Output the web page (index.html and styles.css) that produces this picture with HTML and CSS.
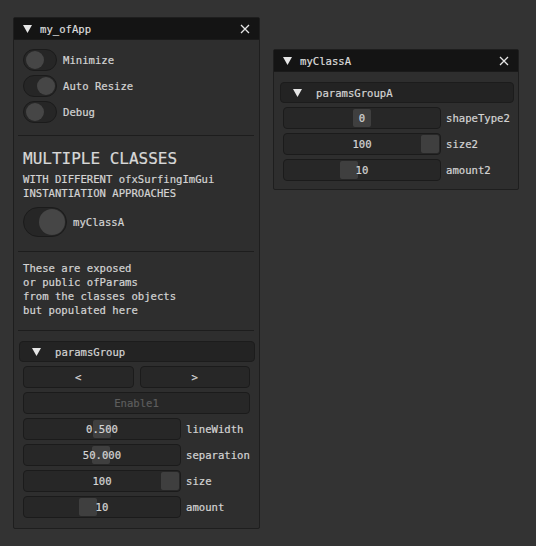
FILE: index.html
```html
<!DOCTYPE html>
<html>
<head>
<meta charset="utf-8">
<link rel="stylesheet" href="styles.css">
</head>
<body>
<div class="desk">
  <div class="win win-left">
    <div class="titlebar">
      <svg class="tri" width="9" height="8" viewBox="0 0 9 8"><polygon points="0,0 9,0 4.5,8" fill="#e6e6e6"/></svg>
      <span class="ttext">my_ofApp</span>
      <svg class="close" width="10" height="10" viewBox="0 0 10 10"><path d="M1 1 L9 9 M9 1 L1 9" stroke="#e6e6e6" stroke-width="1.3"/></svg>
    </div>
    <div class="body">
      <div class="trow"><div class="tog"><div class="knob"></div></div><span>Minimize</span></div>
      <div class="trow"><div class="tog on"><div class="knob"></div></div><span>Auto Resize</span></div>
      <div class="trow"><div class="tog"><div class="knob"></div></div><span>Debug</span></div>
      <div class="sep sep1"></div>
      <div class="big">MULTIPLE CLASSES</div>
      <div class="sub">WITH DIFFERENT ofxSurfingImGui<br>INSTANTIATION APPROACHES</div>
      <div class="trow brow"><div class="tog big-tog on"><div class="knob"></div></div><span>myClassA</span></div>
      <div class="sep sep2"></div>
      <div class="para">These are exposed<br>or public ofParams<br>from the classes objects<br>but populated here</div>
      <div class="sep sep3"></div>
      <div class="header hleft">
        <svg class="tri" width="9" height="8" viewBox="0 0 9 8"><polygon points="0,0 9,0 4.5,8" fill="#e6e6e6"/></svg>
        <span>paramsGroup</span>
      </div>
      <div class="btnrow">
        <div class="frame btn">&lt;</div>
        <div class="frame btn">&gt;</div>
      </div>
      <div class="frame full dis">Enable1</div>
      <div class="srow"><div class="frame slider"><div class="grab" style="left:69px"></div><span class="val">0.500</span></div><span>lineWidth</span></div>
      <div class="srow"><div class="frame slider"><div class="grab" style="left:68px"></div><span class="val">50.000</span></div><span>separation</span></div>
      <div class="srow"><div class="frame slider"><div class="grab" style="left:137px"></div><span class="val">100</span></div><span>size</span></div>
      <div class="srow"><div class="frame slider"><div class="grab" style="left:55px"></div><span class="val">10</span></div><span>amount</span></div>
    </div>
  </div>

  <div class="win win-right">
    <div class="titlebar">
      <svg class="tri" width="9" height="8" viewBox="0 0 9 8"><polygon points="0,0 9,0 4.5,8" fill="#e6e6e6"/></svg>
      <span class="ttext">myClassA</span>
      <svg class="close" width="10" height="10" viewBox="0 0 10 10"><path d="M1 1 L9 9 M9 1 L1 9" stroke="#e6e6e6" stroke-width="1.3"/></svg>
    </div>
    <div class="body rbody">
      <div class="header hright">
        <svg class="tri" width="9" height="8" viewBox="0 0 9 8"><polygon points="0,0 9,0 4.5,8" fill="#e6e6e6"/></svg>
        <span>paramsGroupA</span>
      </div>
      <div class="srow"><div class="frame slider"><div class="grab" style="left:69px"></div><span class="val">0</span></div><span>shapeType2</span></div>
      <div class="srow"><div class="frame slider"><div class="grab" style="left:137px"></div><span class="val">100</span></div><span>size2</span></div>
      <div class="srow"><div class="frame slider"><div class="grab" style="left:56px"></div><span class="val">10</span></div><span>amount2</span></div>
    </div>
  </div>
</div>
</body>
</html>
```

FILE: styles.css
```css
html, body {
  margin: 0;
  padding: 0;
  background: #333333;
  width: 536px;
  height: 546px;
  overflow: hidden;
}
body {
  font-family: "DejaVu Sans Mono", "Liberation Mono", monospace;
  font-size: 10.6px;
  color: #d4d4d4;
  -webkit-text-stroke: 0.2px currentColor;
}
.desk {
  display: flex;
  align-items: flex-start;
  padding: 17px 0 0 13px;
  gap: 13px;
}
.win {
  background: #2e2e2e;
  border: 1px solid #1e1e1e;
  border-radius: 2px;
  box-sizing: border-box;
}
.win-left { width: 247px; height: 512px; }
.win-right { width: 246px; height: 141px; margin-top: 32px; }
.titlebar {
  height: 21px;
  background: #141414;
  display: flex;
  align-items: center;
  padding: 0 9px 0 9px;
  border-bottom: 1px solid #1a1a1a;
}
.titlebar .tri { margin-right: 8px; }
.ttext { flex: 1; font-size: 10.6px; color: #dcdcdc; }
.body {
  padding: 9px 9px 0 9px;
  display: flex;
  flex-direction: column;
}
.trow {
  display: flex;
  align-items: center;
  height: 22px;
  margin-bottom: 4px;
  flex: none;
}
.trow span { margin-left: 6px; }
.tog {
  position: relative;
  width: 34px;
  height: 22px;
  border-radius: 11px;
  background: #262626;
  border: 1px solid #1b1b1b;
  box-sizing: border-box;
}
.knob {
  position: absolute;
  top: 1px;
  left: 2px;
  width: 18px;
  height: 18px;
  border-radius: 50%;
  background: #464646;
}
.tog.on .knob { left: auto; right: 1px; }
.big-tog {
  width: 44px;
  height: 30px;
  border-radius: 15px;
}
.big-tog .knob { width: 26px; height: 26px; top: 1px; }
.brow { height: 30px; margin-top: 7px; margin-bottom: 0; }
.sep {
  height: 1px;
  flex: none;
  background: #1d1d1d;
  margin-left: -5px;
  margin-right: -4px;
}
.sep1 { margin-top: 8px; }
.big {
  font-size: 16px;
  margin-top: 16px;
  line-height: 14px;
  color: #d8d8d8;
}
.sub {
  margin-top: 6px;
  line-height: 14px;
}
.sep2 { margin-top: 14px; }
.para { margin-top: 9px; line-height: 14px; }
.sep3 { margin-top: 13px; }
.header {
  height: 21px;
  flex: none;
  background: #232323;
  border: 1px solid #1c1c1c;
  border-radius: 4px;
  box-sizing: border-box;
  display: flex;
  align-items: center;
}
.hleft { margin: 10px -5px 4px -4px; padding-left: 12px; }
.hleft .tri { margin-right: 14px; }
.hright { margin: 0 -5px 4px -3px; padding-left: 12px; }
.hright .tri { margin-right: 14px; }
.rbody { padding-top: 10px; }
.frame {
  height: 22px;
  flex: none;
  background: #272727;
  border: 1px solid #1b1b1b;
  border-radius: 4px;
  box-sizing: border-box;
  position: relative;
}
.btnrow {
  display: flex;
  gap: 6px;
  margin-bottom: 4px;
  flex: none;
}
.btn {
  flex: 1;
  display: flex;
  align-items: center;
  justify-content: center;
}
.full {
  margin-bottom: 4px;
  display: flex;
  align-items: center;
  justify-content: center;
}
.dis { color: #5d5d5d; }
.srow {
  display: flex;
  align-items: center;
  height: 22px;
  margin-bottom: 4px;
  flex: none;
}
.srow > span { margin-left: 5px; }
.slider { width: 158px; flex: none; display: flex; align-items: center; justify-content: center; }
.grab {
  position: absolute;
  top: 1px;
  width: 18px;
  height: 18px;
  border-radius: 2px;
  background: #3f3f3f;
}
.val { position: relative; }
```
